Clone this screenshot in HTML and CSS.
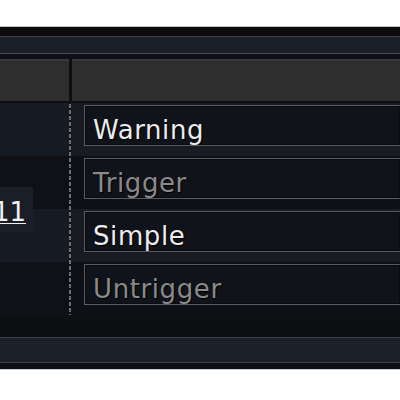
FILE: index.html
```html
<!DOCTYPE html>
<html>
<head>
<meta charset="utf-8">
<link rel="stylesheet" href="styles.css">
</head>
<body>
<div class="page">
  <div class="gap-top"></div>
  <div class="frame">
    <div class="topbar"></div>
    <div class="navbar"></div>
    <div class="header">
      <div class="hcell hleft"></div>
      <div class="hcell hright"></div>
    </div>
    <div class="table">
      <div class="col-left">
        <div class="lrow light"></div>
        <div class="lrow dark"><div class="num"><span>2011</span></div></div>
        <div class="lrow light"></div>
        <div class="lrow dark"></div>
      </div>
      <div class="divider"></div>
      <div class="col-right">
        <div class="rrow light"><div class="box active">Warning</div></div>
        <div class="rrow dark"><div class="box muted">Trigger</div></div>
        <div class="rrow light"><div class="box active">Simple</div></div>
        <div class="rrow dark"><div class="box muted">Untrigger</div></div>
      </div>
    </div>
    <div class="footer"></div>
  </div>
</div>
</body>
</html>
```
FILE: styles.css
```css
html, body {
  margin: 0;
  padding: 0;
  background: #ffffff;
  width: 400px;
  height: 400px;
  overflow: hidden;
  font-family: "DejaVu Sans", "Liberation Sans", sans-serif;
}
.page {
  display: flex;
  flex-direction: column;
}
.gap-top {
  height: 26px;
}
.frame {
  border-top: 1px solid #c4c4c4;
  border-bottom: 1px solid #c3cad8;
  background: #0d0f15;
  display: flex;
  flex-direction: column;
}
.topbar {
  height: 9px;
  background: #0b0b0d;
}
.navbar {
  height: 16px;
  background: #1b1f28;
  border-top: 1px solid #3c3f47;
  border-bottom: 1px solid #4a4d55;
  margin-bottom: 5px;
}
.header {
  display: flex;
  gap: 3px;
  height: 42px;
}
.hcell {
  background: #2e2e2e;
  border-top: 2px solid #383838;
  box-sizing: border-box;
}
.hleft {
  width: 69px;
}
.hright {
  flex: 1;
}
.table {
  display: flex;
  height: 236px;
  padding-top: 2px;
  box-sizing: border-box;
  background: #0e0f13;
}
.col-left {
  width: 69px;
  display: flex;
  flex-direction: column;
}
.lrow {
  height: 53px;
  position: relative;
}
.light {
  background: #161a23;
}
.dark {
  background: #0f1116;
}
.num {
  position: absolute;
  z-index: 2;
  right: 36px;
  top: 31px;
  height: 45px;
  width: 66px;
  background: #1a1e27;
  color: #f0f0f0;
  font-size: 26px;
  line-height: 30px;
  padding-top: 10px;
  overflow: hidden;
  display: flex;
  justify-content: flex-end;
  align-items: flex-start;
  padding-right: 7px;
  box-sizing: border-box;
}
.num span {
  text-decoration: underline;
  text-underline-offset: 2px;
  text-decoration-thickness: 1px;
}
.divider {
  width: 2px;
  background: repeating-linear-gradient(to bottom, #6e6e6e 0 4px, transparent 4px 6px);
  height: 211px;
  margin-top: 1px;
}
.col-right {
  flex: 1;
  display: flex;
  flex-direction: column;
}
.rrow {
  height: 53px;
  padding-top: 2px;
  padding-left: 13px;
  box-sizing: border-box;
}
.rrow.light {
  background: #181b22;
}
.rrow.dark {
  background: #0f1015;
}
.box {
  height: 41px;
  box-sizing: border-box;
  border: 1px solid #5a5c62;
  border-right: none;
  box-shadow: inset 0 0 0 1px #0a0b0f;
  background: #11131a;
  font-size: 26px;
  letter-spacing: 0.6px;
  line-height: 30px;
  padding-top: 9px;
  padding-left: 8px;
  white-space: nowrap;
  overflow: hidden;
}
.active {
  color: #ececec;
  text-shadow: 1px 1px 1px #000;
}
.muted {
  color: #8a8a8a;
  text-shadow: 1px 1px 1px #000;
}
.footer {
  height: 24px;
  background: #1c2029;
  border-top: 1px solid #3d4048;
  border-bottom: 1px solid #404349;
  margin-bottom: 6px;
}
```
